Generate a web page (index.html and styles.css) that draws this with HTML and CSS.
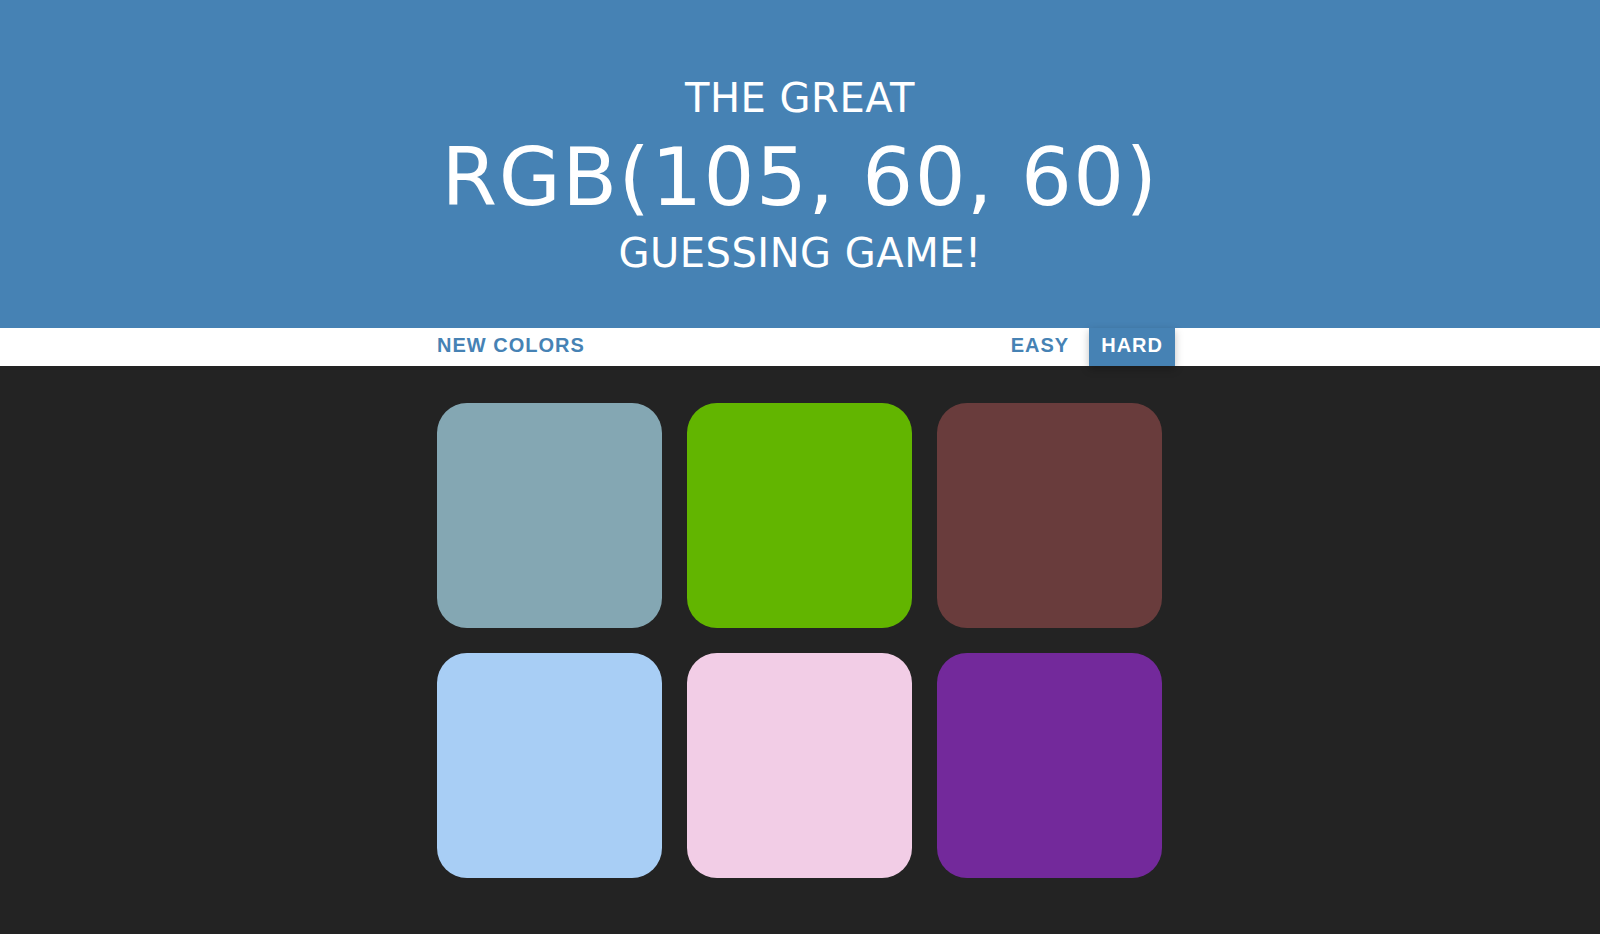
FILE: index.html
```html
<!DOCTYPE html>
<html lang="en">
<head>
<meta charset="utf-8">
<title>Color Game</title>
<link rel="stylesheet" href="styles.css">
</head>
<body>
  <header class="title">
    <div class="title-line title-small">THE GREAT</div>
    <div class="title-line title-big">RGB(105, 60, 60)</div>
    <div class="title-line title-small title-last">GUESSING GAME!</div>
  </header>
  <nav class="stripe">
    <div class="stripe-inner">
      <button class="btn">New Colors</button>
      <span class="message"></span>
      <div class="modes">
        <button class="btn">Easy</button>
        <button class="btn selected">Hard</button>
      </div>
    </div>
  </nav>
  <main class="board">
    <div class="square sq-1"></div>
    <div class="square sq-2"></div>
    <div class="square sq-3"></div>
    <div class="square sq-4"></div>
    <div class="square sq-5"></div>
    <div class="square sq-6"></div>
  </main>
</body>
</html>
```
FILE: styles.css
```css
html, body {
  margin: 0;
  padding: 0;
}
body {
  background: #232323;
  font-family: "DejaVu Sans", Verdana, sans-serif;
  min-height: 934px;
}
.title {
  background: #4682b4;
  color: #ffffff;
  text-align: center;
  padding: 74px 0 51px;
  height: 328px;
  box-sizing: border-box;
}
.title-line {
  font-weight: normal;
}
.title-small {
  font-size: 40px;
  line-height: 48px;
  letter-spacing: 0.5px;
}
.title-big {
  font-size: 80px;
  line-height: 100px;
  margin-top: 6px;
  letter-spacing: 1.5px;
}
.title-last {
  margin-top: 1px;
}
.stripe {
  background: #ffffff;
  height: 38px;
}
.stripe-inner {
  width: 750px;
  height: 100%;
  margin: 0 auto;
  display: flex;
  justify-content: space-between;
  align-items: stretch;
}
.modes {
  display: flex;
  gap: 8px;
}
.btn {
  border: none;
  background: none;
  margin: 0;
  padding: 0 12px 3px;
  height: 100%;
  font-family: "Liberation Sans", Arial, sans-serif;
  font-size: 20px;
  font-weight: 700;
  letter-spacing: 1px;
  text-transform: uppercase;
  color: #4682b4;
  cursor: pointer;
  outline: none;
}
.btn.selected {
  background: #4682b4;
  color: #ffffff;
  box-shadow: 0 3px 8px rgba(0, 0, 0, 0.25);
}
.board {
  width: 750px;
  margin: 0 auto;
  padding: 37px 12px 0;
  box-sizing: border-box;
  display: grid;
  grid-template-columns: repeat(3, 225px);
  grid-auto-rows: 225px;
  gap: 25px;
}
.square {
  border-radius: 30px;
}
.sq-1 { background: #84a7b3; }
.sq-2 { background: #62b500; }
.sq-3 { background: #693c3c; }
.sq-4 { background: #a8cef5; }
.sq-5 { background: #f2cde6; }
.sq-6 { background: #73299b; }
```
